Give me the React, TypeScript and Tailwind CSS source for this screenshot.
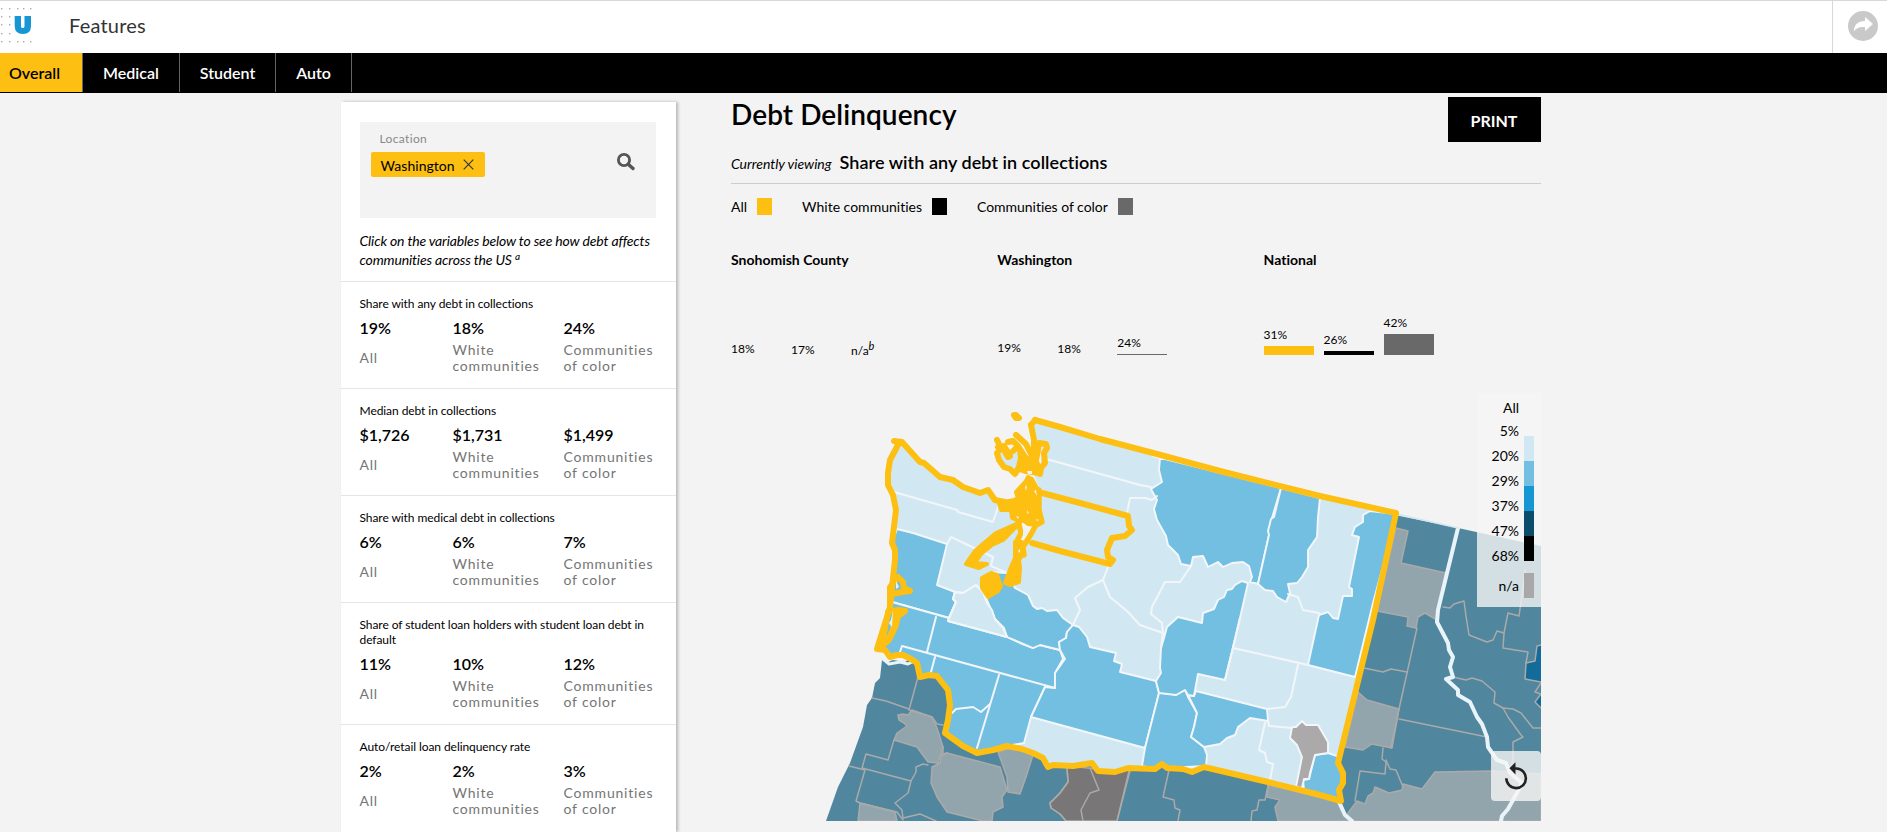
import React from "react";

const tabs = ["Medical", "Student", "Auto"];

const variables = [
  { title: "Share with any debt in collections", values: ["19%", "18%", "24%"], height: "h-[107px]" },
  { title: "Median debt in collections", values: ["$1,726", "$1,731", "$1,499"], height: "h-[107px]" },
  { title: "Share with medical debt in collections", values: ["6%", "6%", "7%"], height: "h-[107px]" },
  { title: "Share of student loan holders with student loan debt in default", values: ["11%", "10%", "12%"], height: "h-[122px]" },
  { title: "Auto/retail loan delinquency rate", values: ["2%", "2%", "3%"], height: "h-[107px]" },
];

const charts = [
  {
    name: "Snohomish County",
    bars: [
      { label: "18%", style: "-mb-[1px]", bar: "h-0" },
      { label: "17%", style: "-mb-[2px]", bar: "h-0" },
      { label: "n/a", note: "b", style: "-mb-[3px]", bar: "h-0" },
    ],
  },
  {
    name: "Washington",
    bars: [
      { label: "19%", style: "mb-0", bar: "h-0" },
      { label: "18%", style: "-mb-[1px]", bar: "h-0" },
      { label: "24%", style: "mb-[4px]", bar: "h-px bg-[#696969]" },
    ],
  },
  {
    name: "National",
    bars: [
      { label: "31%", style: "mb-[4px]", bar: "h-[9px] bg-[#fdbf11]" },
      { label: "26%", style: "mb-[4px]", bar: "h-[4px] bg-black" },
      { label: "42%", style: "mb-[4px]", bar: "h-[21px] bg-[#696969]" },
    ],
  },
];

const scale = [
  { label: "20%", color: "bg-[#cfe8f3]" },
  { label: "29%", color: "bg-[#73bfe2]" },
  { label: "37%", color: "bg-[#1696d2]" },
  { label: "47%", color: "bg-[#0a4c6a]" },
  { label: "68%", color: "bg-black" },
];

const STATE =
  "M1035 420L1060 427L1100 439L1157 454L1220 471L1320 496L1396 513L1373 620L1338 763L1343 773L1343 783L1339 790L1341 801L1320 795L1268 782L1204 767L1192 772L1183 769L1167 768L1162 764L1155 769L1128 768L1115 772L1098 771L1092 763L1073 766L1053 765L1048 767L1043 758L1033 753L1022 749L1007 746L993 750L977 753L963 746L945 733L948 720L950 705L948 690L937 676L929 675L920 677L917 663L911 659L903 655L897 655L890 657L885 650L877 649L887 617L890 607L892 587L895 560L895 550L892 543L896 510L893 495L888 485L888 473L890 460L899 443L894 441L902 442L920 462L924 463L940 477L953 480L963 487L980 493L988 490L995 500L1005 502L1020 502L1027 490L1032 475L1030 465L1034 440L1031 425Z";

const mediumCounties = [
  "M897 529L913 533L947 544L937 585L955 592L953 599L956 602L949 618L892 602L892 587L896 560L892 543Z",
  "M892 602L949 618L948 621L1007 637L1020 643L1033 648L1040 645L1060 650L1063 659L1055 673L1055 688L1045 687L1031 717L1024 743L1007 746L977 753L963 746L945 733L950 705L948 690L937 676L920 676L917 663L903 655L890 657L877 649L887 617Z",
  "M990 572L1007 573L1015 588L1028 595L1033 606L1037 609L1042 608L1047 611L1057 610L1063 618L1073 625L1067 632L1066 638L1059 642L1060 650L1040 645L1033 648L1007 637L1004 628L995 619L987 600L981 588Z",
  "M1073 625L1079 627L1087 637L1090 647L1116 653L1114 661L1122 664L1120 672L1156 681L1159 693L1145 748L1031 717L1045 687L1055 688L1055 673L1065 659L1060 650L1059 642L1066 638L1067 632Z",
  "M1159 693L1170 693L1176 695L1185 690L1188 697L1197 713L1194 727L1191 737L1204 747L1207 755L1206 766L1167 768L1162 764L1155 769L1142 766L1145 748Z",
  "M1188 695L1194 696L1196 691L1267 709L1268 721L1262 720L1250 718L1238 727L1235 735L1227 738L1220 744L1204 747L1191 737L1194 727L1197 713Z",
  "M1167 627L1178 617L1202 623L1203 613L1214 609L1218 600L1224 597L1227 590L1232 589L1235 585L1242 581L1248 583L1240 618L1225 680L1198 674L1194 696L1188 695L1185 690L1176 695L1159 693L1156 681L1161 673L1160 668L1161 648L1164 638Z",
  "M1153 456L1160 458L1159 470L1162 482L1151 489L1157 500L1154 509L1157 520L1166 536L1168 545L1178 555L1181 564L1191 566L1193 557L1203 556L1208 567L1218 562L1223 567L1232 563L1243 562L1249 566L1252 577L1250 582L1258 584L1269 535L1272 518L1281 488Z",
  "M1281 488L1320 498L1318 517L1317 537L1308 550L1308 567L1302 577L1297 583L1288 584L1290 593L1286 602L1277 597L1273 591L1265 590L1258 584L1269 535L1268 531L1271 519L1274 517Z",
  "M1370 511L1363 515L1363 522L1355 527L1352 535L1359 537L1349 587L1352 589L1352 596L1343 596L1338 619L1333 618L1328 612L1319 615L1308 665L1355 677L1373 603L1397 514Z",
  "M1328 753L1337 756L1343 773L1343 783L1339 790L1341 801L1304 790L1303 780L1309 779L1315 755Z",
];

const countyLines = [
  "M1044 459L1050 460L1140 485L1151 487", "M1127 513L1130 498L1145 498L1152 500L1157 496",
  "M1108 567L1103 580L1110 597L1127 611L1140 625L1163 633", "M1103 580L1088 587L1075 598L1080 610L1073 625",
  "M1191 566L1180 582L1165 582L1152 607L1151 614L1162 623L1163 633L1161 648", "M1240 618L1233 648L1225 680", "M1233 648L1308 665",
  "M1298 665L1291 697L1285 707L1267 709", "M1268 721L1269 726L1292 728", "M1265 723L1259 750L1265 753L1267 762L1273 764L1270 780",
  "M1288 594L1298 597L1303 610L1319 613", "M894 492L957 510L958 512L993 522L998 507",
  "M947 544L951 537L993 557L991 566L1007 573", "M955 592L963 593L976 585L983 592L987 601",
  "M955 592L953 599L956 602L949 618", "M936 617L927 652", "M900 652L902 646L1055 688", "M935 657L931 672",
  "M999 675L977 748", "M952 713L956 709L973 707L981 712L990 704",
];

const graySurrounds = [
  "M898 715L903 714L908 715L912 710L932 717L937 728L943 747L938 763L928 762L917 747L894 740L897 733L907 726L904 723L899 720Z",
  "M947 753L1000 767L1007 790L1002 797L1003 807L993 812L992 821L983 821L947 812L937 797L931 783L932 767L940 763L942 754Z",
  "M998 752L1015 747L1033 755L1026 777L1020 794L1008 792L1007 777Z",
  "M860 803L895 812L897 821L858 821Z",
  "M1396 528L1408 531L1401 563L1446 573L1437 620L1425 613L1418 617L1416 628L1407 626L1408 617L1377 611Z",
  "M1358 692L1367 700L1399 709L1392 748L1372 744L1363 750L1345 747Z",
  "M1348 813L1357 801L1365 804L1368 796L1373 793L1375 787L1389 793L1402 790L1403 784L1422 789L1435 772L1493 771L1541 774L1541 821L1346 821Z",
  "M1268 785L1341 802L1345 815L1352 821L1278 821L1275 807L1280 800L1267 797Z",
];

const outerLines = [
  "M918 677L909 710L912 711L932 717L937 724L943 725", "M872 698L886 701L909 709", "M894 740L888 760L866 754L862 768L911 781L916 772L916 767L923 764L928 765",
  "M849 766L865 770L856 801L860 803L897 812L903 820", "M911 781L908 793L895 803L902 810L903 818L920 814L936 821", "M943 747L943 755L947 753",
  "M1067 769L1068 782L1060 793L1050 803L1051 808L1060 814L1066 821", "M1090 768L1099 790L1090 793L1081 810L1083 821", "M1130 771L1117 821",
  "M1169 770L1163 797L1174 800L1175 808L1180 810L1178 821", "M1268 786L1265 800L1259 800L1257 810L1252 811L1251 821",
  "M1417 628L1399 709L1391 748", "M1364 668L1383 672L1391 669L1407 672", "M1399 719L1487 737",
  "M1383 748L1382 759L1386 762L1385 774L1360 771L1355 801", "M1386 760L1390 769L1396 770L1403 787",
  "M1443 607L1450 608L1454 604L1464 601L1466 616L1469 635L1487 642L1493 640L1497 631L1504 633L1508 613L1519 616L1522 595L1525 570",
  "M1504 633L1503 648L1528 652L1526 663L1535 661L1537 646L1541 645", "M1526 663L1525 679L1541 682",
  "M1453 677L1466 680L1472 678L1482 681L1495 692L1494 703L1503 708L1508 717L1521 735L1523 737L1513 742L1513 758L1510 773",
  "M1503 708L1513 709L1521 713L1533 728L1541 728", "M1541 683L1535 692L1541 694L1535 702L1541 708",
];

const soundLines = [
  "M1014 415L1016 415L1019 418L1016 418Z",
  "M1031 425L1034 440L1034 450L1032 457L1036 460L1038 450L1039 443L1046 444L1047 448L1044 453L1045 463L1041 468L1040 474",
  "M997 440L1001 448L997 453L999 460L1004 467L1010 469L1015 474L1019 467L1021 458L1020 450",
  "M998 447L1004 450L1008 457L1010 456L1004 446M1008 442L1013 441L1018 446L1013 451M1016 435L1026 444L1030 452L1036 462L1039 469M1018 446L1025 457L1034 466",
];

const soundAreas = [
  "M1016 492L1026 481L1028 477L1032 479L1038 490L1039 508L1041 521L1036 525L1028 524L1024 521L1017 520L1012 518L1011 510L1001 510L999 503L1014 500L1018 498Z",
  "M1024 457L1030 458L1036 464L1040 467L1039 474L1026 472L1020 470Z",
  "M966 564L975 551L984 543L996 533L1014 525L1020 522L1018 525L1003 540L992 545L981 554L975 563L987 564L979 568Z",
  "M1015 542L1022 542L1023 554L1019 560L1020 568L1019 582L1010 585L1005 583L1011 567L1015 558Z",
  "M982 588L982 578L991 573L997 575L1001 586L998 591L988 597Z",
];

const coastLines = [
  "M888 612L898 610L905 611L898 616L896 625L890 638",
  "M887 618L884 633L878 648M895 615L894 627L888 641L879 648M883 640L886 638",
  "M890 607L890 587L898 577L903 582L904 588L910 591L902 592L893 594",
];

function DelinquencyMap() {
  return (
    <svg className="block h-[431px] w-[810px]" viewBox="731 390 810 431" strokeLinejoin="round" strokeLinecap="round">
      <path fill="#50869e" d="M882 660L886 663L893 660L905 662L915 655L930 665L1000 740L1200 755L1335 780L1390 514L1458 528L1541 546L1541 821L826 821L838 787L850 763L863 727L867 705L872 698L875 683L880 678Z" />
      <path fill="#126b99" d="M1537 646L1541 645L1541 682L1525 679L1526 663L1535 661ZM1541 693L1535 702L1541 707Z" />
      <g fill="#93a5ac" stroke="#aaa" strokeWidth="1.5">
        {graySurrounds.map((d) => <path key={d} d={d} />)}
        <path fill="#787677" d="M1067 766L1098 769L1130 767L1117 821L1066 821L1060 814L1051 808L1050 803L1060 793L1068 782Z" />
      </g>
      <g fill="none" stroke="#aaa" strokeWidth="1.5">
        {outerLines.map((d) => <path key={d} d={d} />)}
      </g>
      <g fill="none" stroke="#e9f4fa" strokeWidth="4">
        <path d="M1458 528L1438 610L1437 622L1448 643L1449 650L1453 657L1450 667L1453 677L1446 679L1458 690L1458 695L1470 702L1477 717L1482 724L1487 737L1488 747L1497 760L1506 763L1510 773L1522 783L1518 791L1513 800L1508 809L1502 816L1501 821" />
        <path d="M1339 802L1345 815L1352 821" />
      </g>
      <path d="M882 658L889 664L900 662L908 664L914 661" fill="none" stroke="#e9f4fa" strokeWidth="3" />
      <path d="M1397 514L1458 528" stroke="#cfe8f3" strokeWidth="1.4" />
      <path fill="#d1e8f3" d={STATE} />
      <path fill="#d1e8f3" d="M998 448L1018 450L1020 468L1010 470L1000 462Z" />
      <g fill="#73bfe2" stroke="#f3f7fa" strokeWidth="1.9">
        {mediumCounties.map((d) => <path key={d} d={d} />)}
        <path fill="#d1e8f3" d="M955 592L963 593L976 585L983 592L987 603L992 610L995 619L1003 628L1007 637L948 621L949 618L956 602L953 599Z" />
        <path fill="#aca9aa" d="M1292 727L1296 727L1302 721L1306 725L1318 725L1328 742L1328 753L1315 755L1310 773L1309 779L1304 779L1302 788L1296 787L1302 757L1297 745L1290 738Z" />
      </g>
      <g fill="none" stroke="#f3f6f9" strokeWidth="2">
        {countyLines.map((d) => <path key={d} d={d} />)}
      </g>
      <path fill="#f3f3f3" d="M1033 448L1042 447L1041 463L1034 458ZM1025 475L1034 475L1040 490L1039 524L1026 544L1018 544L1018 510L1012 500Z" />
      <g fill="none" stroke="#fdbf11" strokeWidth="6">
        <path d={STATE.slice(0, STATE.indexOf("L1005 502"))} />
        <path d="M1035 420L1031 425M995 500L1005 502" />
        <path d="M1042 493L1080 503L1128 516L1129 526L1132 530L1125 536L1112 538L1107 550L1108 557L1113 560L1110 564L1060 551L1032 543" />
        {soundLines.map((d) => <path key={d} d={d} />)}
        {coastLines.map((d) => <path key={d} d={d} />)}
        <path d="M1039 490L1039 510L1042 522L1036 525L1031 534L1023 547L1024 555M1018 520L1021 533L1016 543" strokeWidth="5.4" />
      </g>
      <g fill="#fdbf11" stroke="#fdbf11" strokeWidth="4">
        {soundAreas.map((d) => <path key={d} d={d} />)}
      </g>
      <g fill="#eaf2f5">
        <path d="M1027 471H1032V474H1028ZM1025 487L1027 485L1026 491ZM1034 491L1036 490L1037 496ZM1016 516L1019 517L1018 519ZM1036 519L1039 520L1037 521ZM1027 510L1029 514L1027 513Z" />
        <path d="M1023 530L1029 532L1025 538L1023 535ZM1018 551L1020 549L1020 553ZM893 610L892 627L891 626L889 623L891 620ZM896 581L899 587L896 589Z" />
      </g>
    </svg>
  );
}

function LocationPanel() {
  return (
    <aside className="h-[730px] w-[335px] shrink-0 bg-white shadow-[2px_0_3px_rgba(0,0,0,0.25)]">
      <div className="flex h-[179px] flex-col pt-5 pr-5 pl-[19px]">
        <div className="flex h-24 shrink-0 justify-between bg-[#f3f3f3] pr-[20px] pl-[11px]">
          <div className="pt-[8px]">
            <p className="pl-[9px] text-[12px] leading-[18px] tracking-[0.35px] text-[#888]">Location</p>
            <div className="mt-1 flex h-[25px] w-[114px] items-center justify-between rounded-[2px] bg-[#fdbf11] pt-[2px] pr-[11px] pl-[10px] text-[14px] leading-[20px] tracking-[0.05px]">
              Washington
              <svg className="mb-[2px] size-[11px]" viewBox="0 0 11 11" stroke="#333" strokeWidth="1.1"><path d="M.7.7l9.6 9.6M10.3.7L.7 10.3" /></svg>
            </div>
          </div>
          <svg className="mt-[30px] size-[20px]" viewBox="0 0 20 20" fill="none" stroke="#555" strokeLinecap="round">
            <circle cx="8" cy="8" r="5.6" strokeWidth="2.8" /><path d="M12.5 12.5L17 16.5" strokeWidth="3.4" />
          </svg>
        </div>
        <p className="mt-[13px] text-[14px] leading-[19px] tracking-[-0.15px] whitespace-nowrap italic">Click on the variables below to see how debt affects<br />communities across the US <sup className="top-[-5px] text-[10px] leading-none">a</sup></p>
      </div>
      {variables.map((v) => (
        <section key={v.title} className={`${v.height} border-t border-[#e5e5e5] pt-[14px] pr-5 pl-[19px]`}>
          <h3 className="text-[12px] leading-[15px] tracking-[-0.07px]">{v.title}</h3>
          <div className="mt-[7px] grid grid-cols-[93px_111px_92px] text-[16px] leading-[20px] font-semibold">
            {v.values.map((n, i) => <span key={i}>{n}</span>)}
          </div>
          <div className="mt-[4px] grid grid-cols-[93px_111px_92px] items-center text-[14px] leading-[16px] tracking-[0.8px] whitespace-nowrap text-[#757575]">
            <span>All</span><span>White<br />communities</span><span>Communities<br />of color</span>
          </div>
        </section>
      ))}
    </aside>
  );
}

export default function App() {
  return (
    <div className="h-[832px] overflow-hidden bg-[#f3f3f3] font-['Lato',sans-serif] text-black [font-variant-ligatures:none]">
      <header className="flex h-[53px] border-t border-[#d8d8d8] bg-white">
        <div className="flex flex-1 items-center">
          <svg className="h-[52px] w-[33px]" viewBox="0 1 33 52">
            <g fill="#aaa">
              {[8, 16, 24, 33, 41].map((y) => [1, 9, 17, 23, 30].map((x, i) => (y === 8 || y === 41 || i < 2) && <rect key={`${x}-${y}`} x={x} y={y} width="1.4" height="1.4" />))}
            </g>
            <path fill="#1696d2" d="M14.7 16H21V26.4Q21 28 22.7 28T24.5 26.4V16H31V26Q31 34 22.9 34T14.7 26Z" />
          </svg>
          <span className="ml-[36px] pb-[4px] text-[20px] tracking-[0.2px] text-[#333]">Features</span>
        </div>
        <div className="flex w-[55px] items-center justify-end border-l border-[#d8d8d8] pr-[9px] pb-[2px]">
          <svg className="size-[30px]" viewBox="0 0 30 30">
            <circle cx="15" cy="15" r="15" fill="#c9c9c9" />
            <path d="M17 6L25 13L17 20V16C11.5 15.5 8 17 5.8 20.5C6 13.5 10 10 17 10Z" fill="#fff" />
          </svg>
        </div>
      </header>
      <nav className="flex h-10 bg-black text-[16px] font-semibold text-white">
        <a className="flex h-[39px] w-[83px] items-center border-r border-[#666] bg-[#fdbf11] pl-[9px] text-black">Overall</a>
        {tabs.map((t) => <a key={t} className="flex h-[39px] items-center border-r border-[#666] px-5">{t}</a>)}
      </nav>
      <main className="flex h-[739px] pl-[340.5px]">
        <div className="pt-[9px]"><LocationPanel /></div>
        <div className="ml-[55.5px] w-[810px]">
          <div className="flex h-[49px] items-start justify-between pt-[3px]">
            <h1 className="text-[28px] leading-[36px] font-semibold tracking-[0.08px]">Debt Delinquency</h1>
            <button className="mt-px h-[45px] w-[93px] bg-black pt-[3px] pr-[1px] text-[16px] font-bold text-white">PRINT</button>
          </div>
          <div className="flex h-[42px] items-baseline gap-[8px] border-b border-[#ccc] pt-[8px] leading-[24px]">
            <span className="text-[14px] tracking-[-0.03px] italic">Currently viewing</span>
            <h2 className="text-[18px] font-semibold tracking-[0.06px]">Share with any debt in collections</h2>
          </div>
          <div className="flex h-[62px] items-start gap-[30px] pt-[14px] text-[14px] leading-[18px]">
            <span className="flex gap-[10px]">All<i className="h-[17px] w-[15px] bg-[#fdbf11]" /></span>
            <span className="flex gap-[10px]">White communities<i className="h-[17px] w-[15px] bg-black" /></span>
            <span className="flex gap-[10px] tracking-[-0.03px]">Communities of color<i className="h-[17px] w-[15px] bg-[#696969]" /></span>
          </div>
          <div className="grid h-[144px] grid-cols-[266.3px_266.3px_1fr]">
            {charts.map((c) => (
              <section key={c.name} className="flex h-[109px] flex-col justify-between">
                <h3 className="pt-[5px] text-[14px] leading-[18px] font-bold">{c.name}</h3>
                <div className="flex items-end gap-[10px] text-[12px] leading-[14px]">
                  {c.bars.map((b, i) => (
                    <div key={i} className="w-[50px]">
                      <div className={b.style}>{b.label}{b.note && <sup className="text-[11px] leading-none italic">{b.note}</sup>}</div>
                      <div className={b.bar} />
                    </div>
                  ))}
                </div>
              </section>
            ))}
          </div>
          <div className="relative h-[431px]">
            <DelinquencyMap />
            <div className="absolute top-[3px] right-0 h-[214px] w-[64px] bg-[#f5f5f5]/80 pr-[7px] text-[14px] leading-[18px]">
              <p className="pt-[6px] pr-[15px] text-right">All</p>
              <p className="mt-[5px] pr-[15px] text-right">5%</p>
              <div className="-mt-[4px]">
                {scale.map((s) => (
                  <div key={s.label} className="flex h-[25px] justify-end gap-[5px]">
                    <span className="pt-[11px]">{s.label}</span><i className={`h-[25px] w-[10px] ${s.color}`} />
                  </div>
                ))}
              </div>
              <div className="mt-[12px] flex h-[25px] items-center justify-end gap-[5px]">n/a<i className="h-[25px] w-[10px] bg-[#aaa7a8]" /></div>
            </div>
            <button aria-label="Reset map" className="absolute right-0 bottom-[20px] flex size-[50px] items-center justify-center rounded-[4px] bg-[#f5f5f5]/80">
              <svg className="size-[30px]" viewBox="0 0 30 30" fill="none" stroke="#222" strokeWidth="2.6">
                <path d="M13 7.5H15.5A9.8 9.8 0 1 1 5.3 17.3" /><path d="M14.5 1.3V13.4L8.4 7.3Z" fill="#222" stroke="none" />
              </svg>
            </button>
          </div>
        </div>
      </main>
    </div>
  );
}
